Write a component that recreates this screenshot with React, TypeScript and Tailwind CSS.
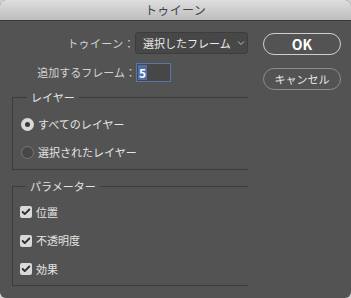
import { Check } from 'lucide-react';

const font = "font-['Noto_Sans_CJK_JP','Noto_Sans',sans-serif]";

function Radio({ checked, label }: { checked?: boolean; label: string }) {
  return (
    <div className="flex items-center h-4 gap-[4px]">
      {checked ? (
        <span className="flex items-center justify-center size-[13px] rounded-full bg-[#d9d9d9]">
          <span className="size-[5px] rounded-full bg-[#3a3a3a]" />
        </span>
      ) : (
        <span className="size-[13px] rounded-full bg-[#474747] border border-[#787878]" />
      )}
      <span className="text-[11px] text-[#e4e4e4]">{label}</span>
    </div>
  );
}

function CheckRow({ label }: { label: string }) {
  return (
    <div className="flex items-center h-4 gap-[4px]">
      <span className="flex items-center justify-center size-[12px] rounded-[2px] bg-[#d9d9d9]">
        <Check size={10} strokeWidth={4.5} className="text-[#2e2e2e]" />
      </span>
      <span className="text-[11px] text-[#e4e4e4]">{label}</span>
    </div>
  );
}

export default function App() {
  return (
    <div className={`w-[351px] h-[298px] bg-[#d0d0d0] ${font}`}>
      <div className="w-full h-full rounded-[6px] overflow-hidden bg-[#535353] flex flex-col">
        <div className="h-[21px] shrink-0 bg-gradient-to-b from-[#dedede] to-[#bdbdbd] border-b border-[#3a3a3a] flex items-center justify-center">
          <span className="text-[12px] tracking-[0.3px] text-[#444] leading-none">トゥイーン</span>
        </div>

        <div className="flex">
          <div className="w-[248px] pl-[12px] pt-[11px]">
            <div className="flex items-center h-[22px]">
              <span className="w-[123px] text-right text-[11px] tracking-[0.4px] text-[#d2d2d2]">トゥイーン：</span>
              <div className="w-[113px] h-[22px] rounded-[3px] bg-[#474747] border border-[#3d3d3d] flex items-center pl-[7px] gap-[6px]">
                <span className="text-[11px] text-[#ececec]">選択したフレーム</span>
                <svg width="8" height="6" viewBox="0 0 8 6" className="text-[#bdbdbd]">
                  <path d="M1 1.5 L4 4.5 L7 1.5" fill="none" stroke="currentColor" strokeWidth="1" />
                </svg>
              </div>
            </div>

            <div className="flex items-center h-[19px] mt-[9px]">
              <span className="w-[124px] text-right text-[11px] text-[#d2d2d2]">追加するフレーム：</span>
              <div className="w-[35px] h-[19px] bg-[#474747] border border-[#5a76a8] flex items-center pl-[1px]">
                <span className="bg-[#4d6ea8] text-white text-[12px] font-semibold leading-[15px] px-[1px]">5</span>
              </div>
            </div>

            <fieldset className="mt-[7px] border-t border-l border-b border-[#3c3c3c] pl-[8px] pt-[11px] pb-[9px]">
              <legend className="ml-[6px] px-[4px] text-[11px] leading-4 text-[#e4e4e4]">レイヤー</legend>
              <div className="flex flex-col gap-[12px]">
                <Radio checked label="すべてのレイヤー" />
                <Radio label="選択されたレイヤー" />
              </div>
            </fieldset>

            <fieldset className="mt-[8px] border-t border-l border-b border-[#3c3c3c] pl-[7px] pt-[10px] pb-[8px]">
              <legend className="ml-[6px] px-[4px] text-[11px] leading-4 text-[#e4e4e4]">パラメーター</legend>
              <div className="flex flex-col gap-[12.5px]">
                <CheckRow label="位置" />
                <CheckRow label="不透明度" />
                <CheckRow label="効果" />
              </div>
            </fieldset>
          </div>

          <div className="ml-[15px] pt-[12px] flex flex-col gap-[13px]">
            <button className="w-[78px] h-[22px] rounded-full border border-[#cfcfcf] text-[14px] font-bold text-white flex items-center justify-center">
              OK
            </button>
            <button className="w-[78px] h-[22px] rounded-full border border-[#8c8c8c] text-[11px] text-[#e6e6e6] flex items-center justify-center">
              キャンセル
            </button>
          </div>
        </div>
      </div>
    </div>
  );
}
